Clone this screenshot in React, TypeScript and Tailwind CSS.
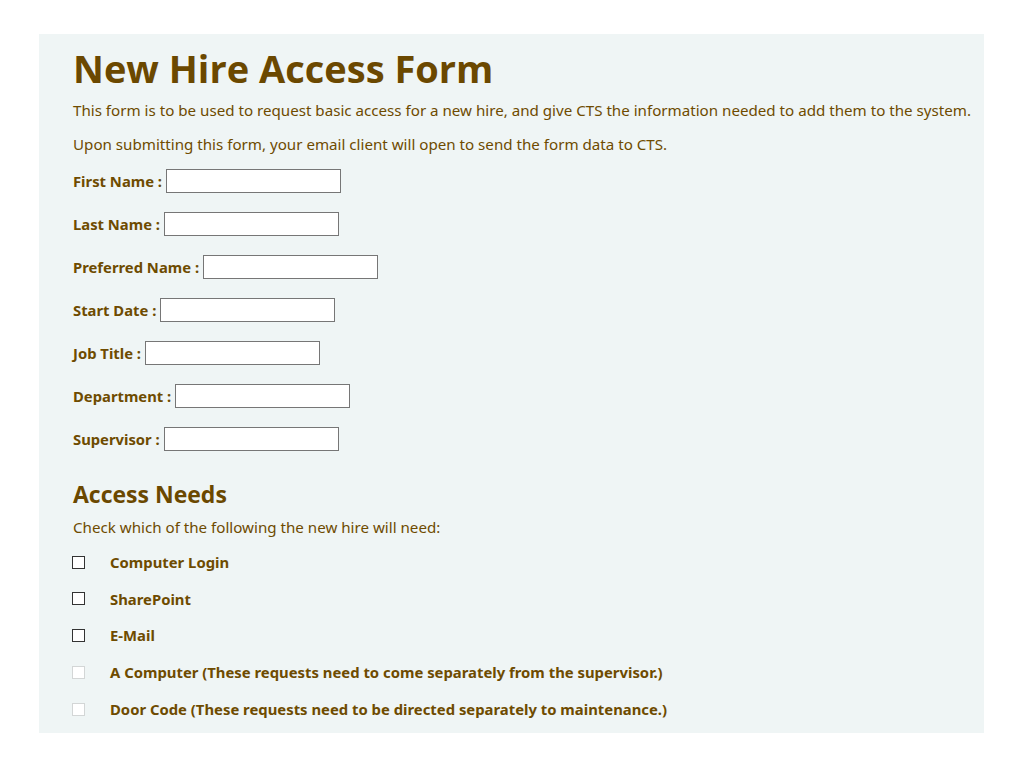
import React from "react";

const fields = [
    "First Name",
    "Last Name",
    "Preferred Name",
    "Start Date",
    "Job Title",
    "Department",
    "Supervisor",
];

const needs = [
    { label: "Computer Login", disabled: false },
    { label: "SharePoint", disabled: false },
    { label: "E-Mail", disabled: false },
    { label: "A Computer (These requests need to come separately from the supervisor.)", disabled: true },
    { label: "Door Code (These requests need to be directed separately to maintenance.)", disabled: true },
];

export default function App() {
    return (
        <div className="min-h-screen bg-white pt-[34px]" style={{ fontFamily: '"Noto Sans", "Lato", sans-serif' }}>
            <form className="ml-[39px] w-[945px] bg-[#eff5f5] pl-[34px] pt-[8px] pb-[14px] text-[#6e4b00]">
                <h1
                    className="text-[38px] leading-[52px] font-bold text-[#6b4800]"
                    style={{ fontFamily: '"Open Sans", sans-serif' }}
                >
                    New Hire Access Form
                </h1>
                <p className="mt-[6px] text-[15.15px] leading-[20px]">
                    This form is to be used to request basic access for a new hire, and give CTS the information needed to add them to the system.
                </p>
                <p className="mt-[14px] text-[15.15px] leading-[20px]">
                    Upon submitting this form, your email client will open to send the form data to CTS.
                </p>

                <div className="mt-[15px] flex flex-col gap-[19px]">
                    {fields.map((f) => (
                        <label key={f} className="flex items-center h-[24px] text-[14.8px] font-bold">
                            <span>{f} :</span>
                            <input type="text" className="ml-[4px] w-[175px] h-[24px] border border-[#767676] bg-white" />
                        </label>
                    ))}
                </div>

                <h2
                    className="mt-[28px] text-[23px] leading-[30px] font-bold text-[#6b4800]"
                    style={{ fontFamily: '"Open Sans", sans-serif' }}
                >
                    Access Needs
                </h2>
                <p className="mt-[8px] text-[15.15px] leading-[20px]">Check which of the following the new hire will need:</p>

                <div className="mt-[15px] flex flex-col gap-[16.75px]">
                    {needs.map((n) => (
                        <label key={n.label} className="flex items-center h-[20px] text-[14.85px] font-bold">
                            <input
                                type="checkbox"
                                disabled={n.disabled}
                                className={
                                    n.disabled
                                        ? "appearance-none ml-[-1px] w-[13px] h-[13px] border border-[#d3d6d6] bg-white"
                                        : "appearance-none ml-[-1px] w-[13px] h-[13px] border border-[#333333] bg-white"
                                }
                            />
                            <span className="ml-[25px]">{n.label}</span>
                        </label>
                    ))}
                </div>
            </form>
        </div>
    );
}
